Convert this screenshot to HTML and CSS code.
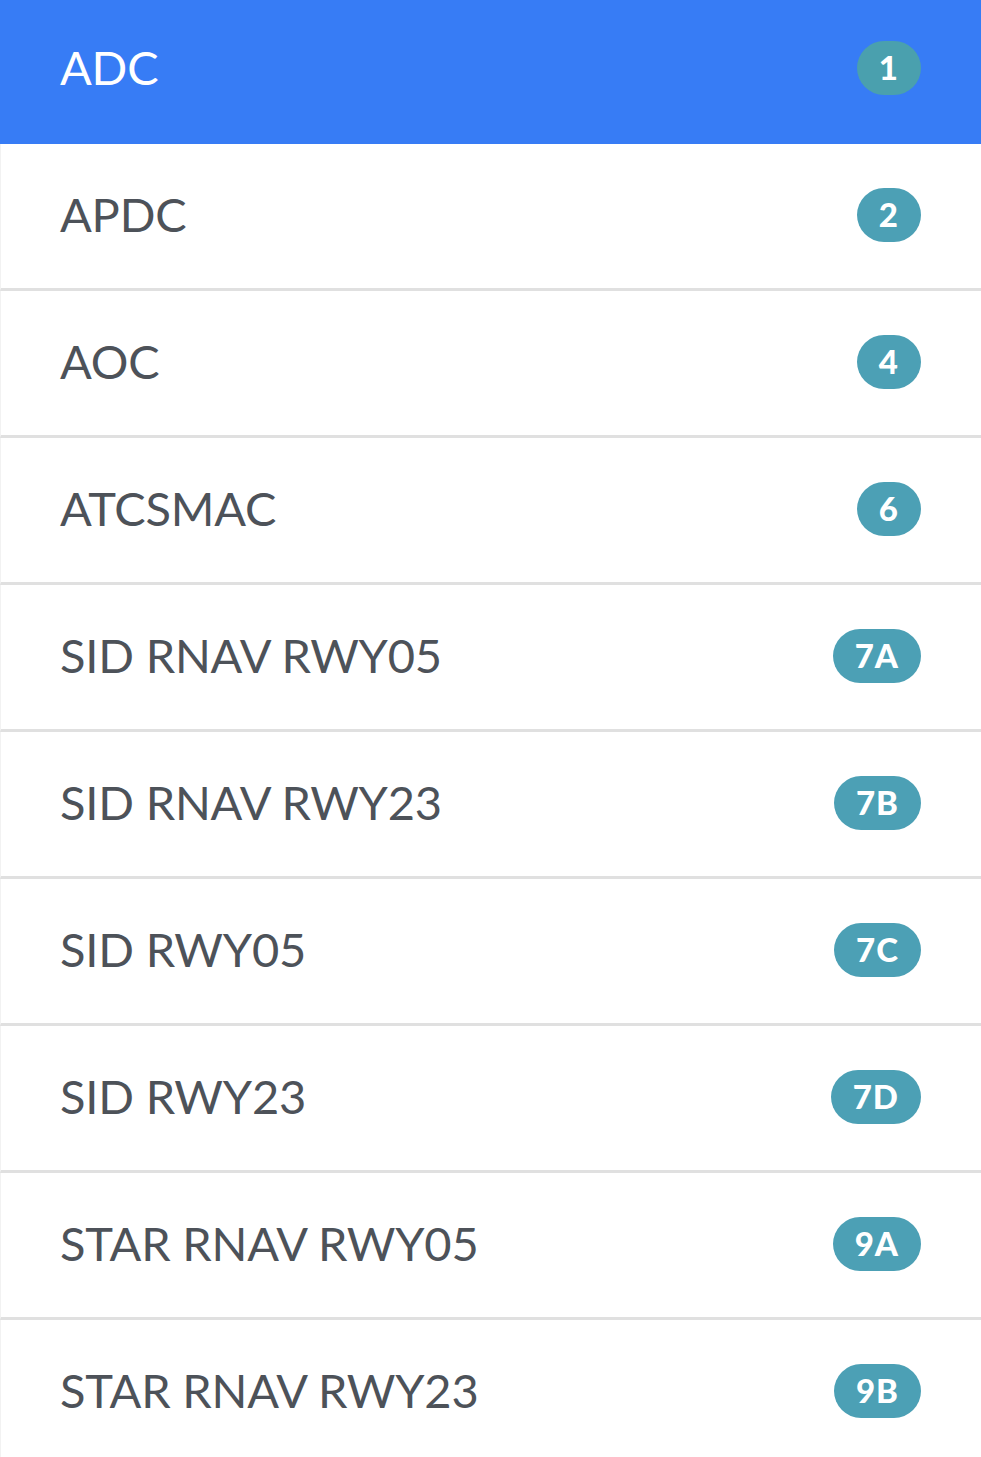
FILE: index.html
```html
<!DOCTYPE html>
<html>
<head>
<meta charset="utf-8">
<link rel="stylesheet" href="styles.css">
</head>
<body>
<ul class="list">
  <li class="item active"><span class="label">ADC</span><span class="badge">1</span></li>
  <li class="item"><span class="label">APDC</span><span class="badge">2</span></li>
  <li class="item"><span class="label">AOC</span><span class="badge">4</span></li>
  <li class="item"><span class="label">ATCSMAC</span><span class="badge">6</span></li>
  <li class="item"><span class="label">SID RNAV RWY05</span><span class="badge">7A</span></li>
  <li class="item"><span class="label">SID RNAV RWY23</span><span class="badge">7B</span></li>
  <li class="item"><span class="label">SID RWY05</span><span class="badge">7C</span></li>
  <li class="item"><span class="label">SID RWY23</span><span class="badge">7D</span></li>
  <li class="item"><span class="label">STAR RNAV RWY05</span><span class="badge">9A</span></li>
  <li class="item"><span class="label">STAR RNAV RWY23</span><span class="badge">9B</span></li>
</ul>
</body>
</html>
```

FILE: styles.css
```css
html, body {
  margin: 0;
  padding: 0;
  background: #ffffff;
}

.list {
  list-style: none;
  margin: 0;
  padding: 0;
  font-family: Lato, "Liberation Sans", sans-serif;
}

.item {
  display: flex;
  align-items: center;
  justify-content: space-between;
  box-sizing: border-box;
  height: 147px;
  padding: 0 60px 3px 59px;
  border-bottom: 3px solid #e0e0e0;
  border-left: 1px solid #f2f2f2;
  background: #ffffff;
}

.item.active {
  height: 144px;
  background: #377cf5;
  border-bottom: 0;
  border-left-color: #377cf5;
  padding-bottom: 9px;
}

.label {
  font-size: 47px;
  line-height: 1;
  font-weight: 400;
  color: #4d5259;
  letter-spacing: -0.2px;
}

.item.active .label {
  color: #ffffff;
}

.badge {
  display: flex;
  align-items: center;
  justify-content: center;
  box-sizing: border-box;
  min-width: 64px;
  height: 54px;
  padding: 0 22px;
  border-radius: 27px;
  background: #4ca0b5;
  color: #ffffff;
  font-size: 33px;
  font-weight: 900;
  letter-spacing: 1px;
  line-height: 1;
}

.item.active .badge {
  background: #4aa0ae;
}
```
